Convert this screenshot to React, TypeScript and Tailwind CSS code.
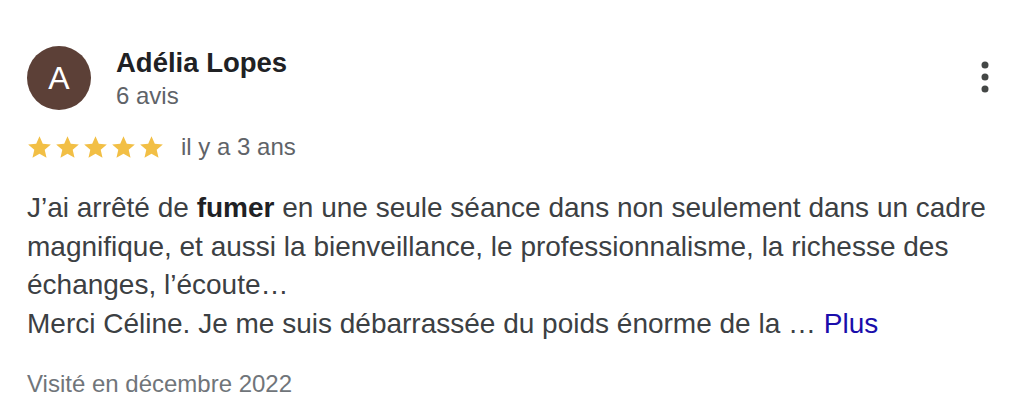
function Star() {
  return (
    <svg viewBox="0 0 24 24" className="h-[25px] w-[25px]" fill="#f2bf45">
      <path d="M12 1.2l3.15 7.2 7.75.7-5.9 5.15 1.75 7.65L12 17.9l-6.75 4 1.75-7.65-5.9-5.15 7.75-.7z" />
    </svg>
  )
}

function MoreIcon() {
  return (
    <svg viewBox="0 0 8 32" className="h-[32px] w-[8px]" fill="#444746">
      <circle cx="4" cy="4" r="3.5" />
      <circle cx="4" cy="16" r="3.5" />
      <circle cx="4" cy="28" r="3.5" />
    </svg>
  )
}

export default function App() {
  return (
    <div className="min-h-[416px] w-full bg-white font-['Liberation_Sans',Arial,sans-serif]">
      <div className="pl-[27px] pr-[43px] pt-[46px]">
        {/* Header */}
        <div className="flex items-start">
          <div className="flex h-[64px] w-[64px] shrink-0 items-center justify-center rounded-full bg-[#5c4037] text-[32px] leading-none text-white">
            A
          </div>
          <div className="ml-[25px] flex flex-col pt-[1px]">
            <span className="text-[27.5px] font-bold leading-[32px] text-[#202124]">Adélia Lopes</span>
            <span className="mt-[3px] text-[24px] leading-[28px] text-[#5f6368]">6 avis</span>
          </div>
          <button className="ml-auto mt-[15px]" aria-label="Options">
            <MoreIcon />
          </button>
        </div>

        {/* Rating */}
        <div className="mt-[19px] flex h-[36px] items-center">
          <div className="flex gap-[3px]">
            <Star />
            <Star />
            <Star />
            <Star />
            <Star />
          </div>
          <span className="ml-[17px] text-[24px] leading-[36px] text-[#5f6368]">il y a 3 ans</span>
        </div>

        {/* Body */}
        <p className="mt-[24px] text-[28px] leading-[38.5px] text-[#3c4043]">
          J’ai arrêté de <b className="text-[#202124]">fumer</b> en une seule séance dans non seulement dans un cadre
          <br />
          magnifique, et aussi la bienveillance, le professionnalisme, la richesse des
          <br />
          échanges, l’écoute…
          <br />
          Merci Céline. Je me suis débarrassée du poids énorme de la …{' '}
          <a href="#" className="text-[#1a0dab]">Plus</a>
        </p>

        <div className="mt-[27px] text-[24px] leading-[28px] text-[#70757a]">Visité en décembre 2022</div>
      </div>
    </div>
  )
}
